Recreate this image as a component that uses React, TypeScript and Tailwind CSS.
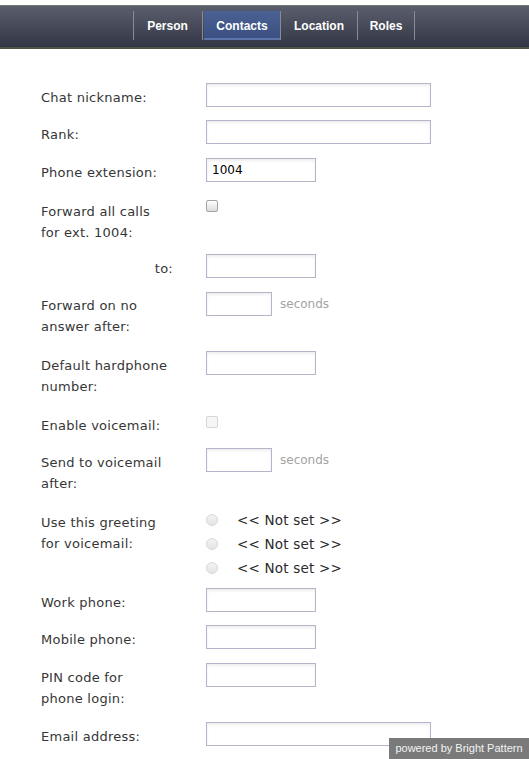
import React from "react";

const labelFont = { fontFamily: '"DejaVu Sans", Verdana, sans-serif' };

function TextInput({ w, value }: { w: string; value?: string }) {
  return (
    <div
      className={`${w} h-[24px] border border-[#b3b6ca] bg-white shadow-[inset_0_2px_3px_rgba(0,0,0,0.07)] pl-[5px] flex items-center text-[12px] text-black`}
      style={labelFont}
    >
      {value}
    </div>
  );
}

function Checkbox({ disabled }: { disabled?: boolean }) {
  return (
    <div
      className={
        disabled
          ? "w-[12px] h-[12px] rounded-[2px] border border-[#d6d6d6] bg-[#f5f5f5]"
          : "w-[12px] h-[12px] rounded-[2px] border border-[#a3a3a3] bg-gradient-to-b from-white to-[#dcdcdc]"
      }
    />
  );
}

function Radio() {
  return <div className="w-[12px] h-[12px] rounded-full border border-[#d8d8d8] bg-gradient-to-b from-[#f4f4f4] to-[#e4e4e4]" />;
}

function Seconds() {
  return (
    <span className="ml-[8px] text-[12px] text-[#a3a3a3]" style={labelFont}>
      seconds
    </span>
  );
}

function Label({ children, right }: { children: React.ReactNode; right?: boolean }) {
  return (
    <div
      className={`w-[132px] mr-[33px] pt-[4px] text-[13px] leading-[21px] tracking-[0.25px] text-[#363636] ${right ? "text-right" : ""}`}
      style={labelFont}
    >
      {children}
    </div>
  );
}

export default function App() {
  return (
    <div className="relative w-[529px] min-h-[759px] bg-white">
      {/* Header */}
      <div className="mt-[5px] h-[44px] border-t border-[#72766e] border-b-2 border-b-[#4c5347] bg-gradient-to-b from-[#5b5f6d] to-[#333745]">
        <div className="flex ml-[133px] mt-[5px] h-[29px]" style={{ fontFamily: '"Liberation Sans", Arial, sans-serif' }}>
          <div className="border-l border-[#878b94] px-[14px] flex items-center text-[12px] font-bold text-white w-[68px] justify-center">
            Person
          </div>
          <div className="border-l border-[#878b94] ml-[1px] border-r border-r-[#878b94] flex">
            <div className="w-[76px] ml-[1px] flex items-center justify-center text-[12px] font-bold text-white bg-gradient-to-b from-[#4a6193] to-[#3a4f80] shadow-[inset_0_-2px_0_#5b74aa]">
              Contacts
            </div>
          </div>
          <div className="px-[14px] flex items-center justify-center text-[12px] font-bold text-white w-[77px] border-r border-[#878b94]">
            Location
          </div>
          <div className="px-[14px] flex items-center justify-center text-[12px] font-bold text-white w-[57px] border-r border-[#878b94]">
            Roles
          </div>
        </div>
      </div>

      {/* Form */}
      <div className="pl-[41px] pt-[34px] flex flex-col">
        <div className="flex h-[37px]">
          <Label>Chat nickname:</Label>
          <TextInput w="w-[225px]" />
        </div>
        <div className="flex h-[38px]">
          <Label>Rank:</Label>
          <TextInput w="w-[225px]" />
        </div>
        <div className="flex h-[39px]">
          <Label>Phone extension:</Label>
          <TextInput w="w-[110px]" value="1004" />
        </div>
        <div className="flex h-[57px]">
          <Label>
            Forward all calls
            <br />
            for ext. 1004:
          </Label>
          <div className="pt-[3px]">
            <Checkbox />
          </div>
        </div>
        <div className="flex h-[37px]">
          <Label right>to:</Label>
          <TextInput w="w-[110px]" />
        </div>
        <div className="flex h-[60px]">
          <Label>
            Forward on no
            <br />
            answer after:
          </Label>
          <div className="flex items-center h-[24px] mt-[1px]">
            <TextInput w="w-[66px]" />
            <Seconds />
          </div>
        </div>
        <div className="flex h-[60px]">
          <Label>
            Default hardphone
            <br />
            number:
          </Label>
          <TextInput w="w-[110px]" />
        </div>
        <div className="flex h-[37px]">
          <Label>Enable voicemail:</Label>
          <div className="pt-[5px]">
            <Checkbox disabled />
          </div>
        </div>
        <div className="flex h-[60px]">
          <Label>
            Send to voicemail
            <br />
            after:
          </Label>
          <div className="flex items-center h-[24px]">
            <TextInput w="w-[66px]" />
            <Seconds />
          </div>
        </div>
        <div className="flex h-[80px]">
          <Label>
            Use this greeting
            <br />
            for voicemail:
          </Label>
          <div className="flex flex-col">
            {[0, 1, 2].map((i) => (
              <div key={i} className="flex items-center h-[24px]">
                <Radio />
                <span className="ml-[19px] text-[13.5px] text-[#2a2a2a] tracking-[0.2px]" style={labelFont}>
                  {"<< Not set >>"}
                </span>
              </div>
            ))}
          </div>
        </div>
        <div className="flex h-[37px]">
          <Label>Work phone:</Label>
          <TextInput w="w-[110px]" />
        </div>
        <div className="flex h-[38px]">
          <Label>Mobile phone:</Label>
          <TextInput w="w-[110px]" />
        </div>
        <div className="flex h-[59px]">
          <Label>
            PIN code for
            <br />
            phone login:
          </Label>
          <TextInput w="w-[110px]" />
        </div>
        <div className="flex h-[40px]">
          <Label>Email address:</Label>
          <TextInput w="w-[225px]" />
        </div>
      </div>

      {/* Badge overlay */}
      <div
        className="fixed right-0 bottom-0 w-[140px] h-[21px] bg-[#7a7a7a] text-[#f2f2f2] text-[11px] flex items-center justify-center"
        style={{ fontFamily: '"Liberation Sans", Arial, sans-serif' }}
      >
        powered by Bright Pattern
      </div>
    </div>
  );
}
